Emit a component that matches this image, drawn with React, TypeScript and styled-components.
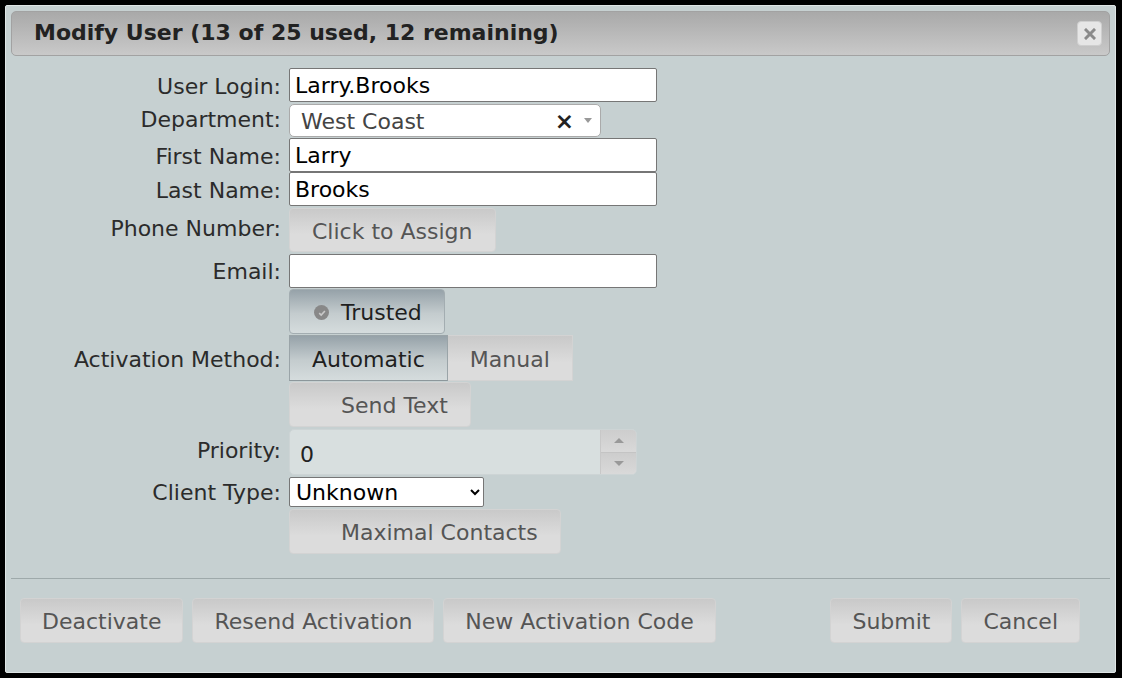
import React from "react";
import styled, { createGlobalStyle, css } from "styled-components";

const Global = createGlobalStyle`
  html, body { margin: 0; padding: 0; background: #000; }
  body { font-family: "DejaVu Sans", Verdana, sans-serif; }
  * { box-sizing: border-box; }
`;

const FS = "22px";

const Page = styled.div`
  width: 1122px;
  height: 678px;
  padding: 5px 6px 5px 5px;
  background: #000;
`;

const Dialog = styled.div`
  width: 1111px;
  height: 668px;
  background: #c6d0d1;
  border: 1px solid #dfe5e5;
  border-radius: 2px;
  padding: 5px;
  display: flex;
  flex-direction: column;
`;

const TitleBar = styled.div`
  height: 45px;
  flex: none;
  display: flex;
  align-items: center;
  justify-content: space-between;
  padding: 0 7px 0 22px;
  border: 1px solid #a2a2a2;
  border-radius: 5px;
  background: linear-gradient(#a9a9a9, #c9c9c9);
`;

const Title = styled.h1`
  margin: 0;
  font-size: 22px;
  font-weight: bold;
  color: #222;
  transform: translateY(-1px);
`;

const CloseButton = styled.button`
  width: 25px;
  height: 25px;
  padding: 0;
  border: 1px solid #cfcfcf;
  border-radius: 4px;
  background: #e6e6e6;
  display: flex;
  align-items: center;
  justify-content: center;
`;

const Form = styled.div`
  margin-top: 12px;
  display: grid;
  grid-template-columns: 270px 1fr;
  column-gap: 8px;
  row-gap: 1px;
  flex: 1;
  align-content: start;
`;

const Label = styled.label<{ $nudge?: number }>`
  align-self: center;
  text-align: right;
  font-size: ${FS};
  color: #2b2b2b;
  white-space: nowrap;
  transform: translateY(${(p) => p.$nudge ?? 1}px);
`;

const Field = styled.div<{ $mt?: number }>`
  display: flex;
  align-items: center;
  margin-top: ${(p) => p.$mt ?? 0}px;
`;

const TextInput = styled.input`
  width: 368px;
  height: 34px;
  border: 1px solid #767676;
  border-radius: 2px;
  background: #fff;
  padding: 1px 5px 0;
  font-family: "DejaVu Sans", Verdana, sans-serif;
  font-size: ${FS};
  color: #000;
  outline: none;
`;

const ChosenSelect = styled.div`
  width: 312px;
  height: 33px;
  border: 1px solid #aaa;
  border-radius: 5px;
  background: #fff;
  display: flex;
  align-items: center;
  padding: 1px 8px 0 11px;
  font-size: ${FS};
  color: #444;
`;

const ChosenValue = styled.span`
  flex: 1;
`;

const ChosenClear = styled.span`
  font-size: 23px;
  font-weight: bold;
  color: #222;
  margin-right: 10px;
  line-height: 1;
`;

const ChosenArrow = styled.span`
  width: 0;
  height: 0;
  border-left: 4px solid transparent;
  border-right: 4px solid transparent;
  border-top: 5px solid #999;
  margin-top: -2px;
`;

const Button = styled.button<{ $active?: boolean; $group?: "first" | "last" }>`
  height: 45px;
  padding: 2px 22px 0 22px;
  font-family: "DejaVu Sans", Verdana, sans-serif;
  font-size: ${FS};
  color: #555;
  border: 1px solid #d3d3d3;
  border-radius: 4px;
  background: linear-gradient(#c9c9c9, #dcdcdc 60%, #dcdcdc);
  display: inline-flex;
  align-items: center;
  white-space: nowrap;
  cursor: pointer;
  ${(p) =>
    p.$active &&
    css`
      color: #1f1f1f;
      border-color: #a3adb1;
      background: linear-gradient(#96a2a9, #c4ccce 55%, #d5dcdd);
    `}
  ${(p) =>
    p.$group === "first" &&
    css`
      border-radius: 0;
      border-color: #9aa4a8 #9aa4a8 #8c979b #9aa4a8;
    `}
  ${(p) =>
    p.$group === "last" &&
    css`
      border-radius: 0;
      border-left: none;
    `}
`;

const FooterButton = styled(Button)`
  padding: 2px 21px 0 21px;
`;

const IconSlot = styled.span<{ $hidden?: boolean }>`
  width: 15px;
  height: 15px;
  margin-right: 12px;
  margin-left: 2px;
  border-radius: 50%;
  background: #888;
  display: inline-flex;
  align-items: center;
  justify-content: center;
  visibility: ${(p) => (p.$hidden ? "hidden" : "visible")};
`;

const ButtonGroup = styled.div`
  display: flex;
`;

const Spinner = styled.div`
  width: 348px;
  height: 46px;
  display: flex;
  border: 1px solid #cdd4d5;
  border-radius: 5px;
  background: #d8dfdf;
  overflow: hidden;
`;

const SpinnerValue = styled.div`
  flex: 1;
  display: flex;
  align-items: center;
  padding: 4px 0 0 10px;
  font-size: ${FS};
  color: #222;
`;

const SpinnerButtons = styled.div`
  width: 36px;
  display: flex;
  flex-direction: column;
  border-left: 1px solid #c8c8c8;
`;

const SpinnerStep = styled.div<{ $down?: boolean }>`
  flex: 1;
  display: flex;
  align-items: center;
  justify-content: center;
  background: linear-gradient(#cdcdcd, #d9d9d9);
  ${(p) => p.$down && css`border-top: 1px solid #c4c4c4;`}
`;

const Tri = styled.span<{ $down?: boolean }>`
  width: 0;
  height: 0;
  border-left: 5px solid transparent;
  border-right: 5px solid transparent;
  ${(p) =>
    p.$down
      ? css`border-top: 5px solid #999;`
      : css`border-bottom: 5px solid #999;`}
`;

const NativeSelect = styled.select`
  width: 195px;
  height: 30px;
  border: 1px solid #767676;
  border-radius: 2px;
  background: #fff;
  font-family: "DejaVu Sans", Verdana, sans-serif;
  font-size: ${FS};
  color: #000;
  padding: 1px 2px 0;
`;

const Footer = styled.div`
  flex: none;
  display: flex;
  gap: 9px;
  border-top: 1px solid #9ea9aa;
  padding: 19px 30px 24px 9px;
`;

const Spacer = styled.div`
  flex: 1;
`;

function CheckIcon() {
  return (
    <svg width="10" height="10" viewBox="0 0 10 10">
      <path d="M2.2 5.2 L4.2 7.1 L7.9 3" fill="none" stroke="#c9c9c9" strokeWidth="1.6" />
    </svg>
  );
}

function CloseIcon() {
  return (
    <svg width="12" height="12" viewBox="0 0 12 12">
      <path d="M2 2 L10 10 M10 2 L2 10" stroke="#8a8a8a" strokeWidth="3" strokeLinecap="square" />
    </svg>
  );
}

export default function App() {
  return (
    <>
      <Global />
      <Page>
        <Dialog>
          <TitleBar>
            <Title>Modify User (13 of 25 used, 12 remaining)</Title>
            <CloseButton aria-label="close">
              <CloseIcon />
            </CloseButton>
          </TitleBar>

          <Form>
            <Label>User Login:</Label>
            <Field>
              <TextInput defaultValue="Larry.Brooks" />
            </Field>

            <Label $nudge={-1}>Department:</Label>
            <Field $mt={1}>
              <ChosenSelect>
                <ChosenValue>West Coast</ChosenValue>
                <ChosenClear>×</ChosenClear>
                <ChosenArrow />
              </ChosenSelect>
            </Field>

            <Label>First Name:</Label>
            <Field>
              <TextInput defaultValue="Larry" />
            </Field>

            <Label>Last Name:</Label>
            <Field $mt={-1}>
              <TextInput defaultValue="Brooks" />
            </Field>

            <Label $nudge={-1}>Phone Number:</Label>
            <Field $mt={1}>
              <Button style={{ height: 44 }}>Click to Assign</Button>
            </Field>

            <Label>Email:</Label>
            <Field $mt={1}>
              <TextInput defaultValue="" />
            </Field>

            <div />
            <Field>
              <Button $active>
                <IconSlot>
                  <CheckIcon />
                </IconSlot>
                Trusted
              </Button>
            </Field>

            <Label>Activation Method:</Label>
            <Field>
              <ButtonGroup>
                <Button $active $group="first" style={{ height: 46 }}>
                  Automatic
                </Button>
                <Button $group="last" style={{ height: 46 }}>
                  Manual
                </Button>
              </ButtonGroup>
            </Field>

            <div />
            <Field>
              <Button>
                <IconSlot $hidden />
                Send Text
              </Button>
            </Field>

            <Label $nudge={-1}>Priority:</Label>
            <Field $mt={1}>
              <Spinner>
                <SpinnerValue>0</SpinnerValue>
                <SpinnerButtons>
                  <SpinnerStep>
                    <Tri />
                  </SpinnerStep>
                  <SpinnerStep $down>
                    <Tri $down />
                  </SpinnerStep>
                </SpinnerButtons>
              </Spinner>
            </Field>

            <Label>Client Type:</Label>
            <Field $mt={1}>
              <NativeSelect defaultValue="Unknown">
                <option>Unknown</option>
                <option>Desktop</option>
                <option>Mobile</option>
              </NativeSelect>
            </Field>

            <div />
            <Field $mt={1}>
              <Button>
                <IconSlot $hidden />
                Maximal Contacts
              </Button>
            </Field>
          </Form>

          <Footer>
            <FooterButton>Deactivate</FooterButton>
            <FooterButton>Resend Activation</FooterButton>
            <FooterButton>New Activation Code</FooterButton>
            <Spacer />
            <FooterButton>Submit</FooterButton>
            <FooterButton>Cancel</FooterButton>
          </Footer>
        </Dialog>
      </Page>
    </>
  );
}
